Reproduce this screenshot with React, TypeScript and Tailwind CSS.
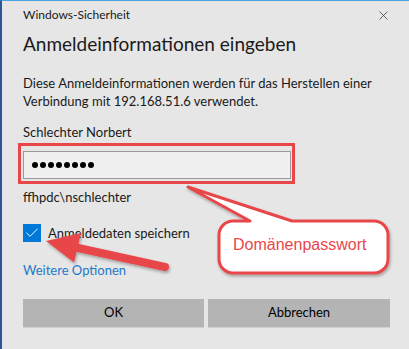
import { Check, X } from "lucide-react"

const font = { fontFamily: 'Lato, "Noto Sans", sans-serif' }

function Overlay() {
    return (
        <svg
            className="absolute left-0 top-0 pointer-events-none"
            width={409}
            height={349}
            viewBox="0 0 409 349"
        >
            <defs>
                <filter id="shadow" x="-20%" y="-20%" width="140%" height="160%">
                    <feDropShadow dx="1" dy="2" stdDeviation="1.5" floodColor="#000" floodOpacity="0.3" />
                </filter>
            </defs>
            {/* callout bubble */}
            <path
                d="M186 186 L290 220 H372 A14 14 0 0 1 386 234 V258 A14 14 0 0 1 372 272 H231 A14 14 0 0 1 217 258 V234 A14 14 0 0 1 231 220 H248 Z"
                fill="#fff"
                stroke="#e8474a"
                strokeWidth={3}
                strokeLinejoin="round"
                filter="url(#shadow)"
            />
            {/* arrow to the checkbox */}
            <g filter="url(#shadow)">
                <line x1={163} y1={266} x2={74} y2={246.5} stroke="#e8474a" strokeWidth={8} strokeLinecap="round" />
                <polygon points="44,240 79,232 72,261.5" fill="#e8474a" />
            </g>
        </svg>
    )
}

export default function App() {
    return (
        <div
            className="relative w-[409px] h-[349px] overflow-hidden bg-[#e6e6e6] border-l-2 border-l-[#2b5797] border-t border-t-[#4aa3df] text-[#1a1a1a]"
            style={font}
        >
            <div className="pl-[21px] pr-[19px]">
                <div className="flex items-center justify-between pt-[6px] h-[22px]">
                    <span className="text-[12px] leading-4">Windows-Sicherheit</span>
                    <X className="w-[15px] h-[15px] text-[#333] mr-[-1px]" strokeWidth={1.2} />
                </div>
                <h1 className="mt-[7px] text-[19px] leading-7 font-normal">Anmeldeinformationen eingeben</h1>
                <p className="mt-[16px] text-[13px] leading-[18px]">
                    Diese Anmeldeinformationen werden für das Herstellen einer
                    <br />
                    Verbindung mit 192.168.51.6 verwendet.
                </p>
                <div className="mt-[13px] text-[13px] leading-[18px]">Schlechter Norbert</div>
                <div className="mt-[10px] w-[268px] h-[28px] bg-[#f0f0f0] border border-[#9a9a9a] flex items-center pl-[8px] gap-[2px]">
                    {Array.from({ length: 8 }).map((_, i) => (
                        <span key={i} className="w-[6px] h-[6px] rounded-full bg-black" />
                    ))}
                </div>
                <div className="mt-[9px] text-[13px] leading-[18px]">ffhpdc\nschlechter</div>
                <div className="mt-[17px] h-[20px] flex items-center gap-[7px]">
                    <span className="w-[18px] h-[18px] bg-[#0078d7] flex items-center justify-center">
                        <Check className="w-[16px] h-[16px] text-white" strokeWidth={1.4} />
                    </span>
                    <span className="text-[13px] leading-[18px]">Anmeldedaten speichern</span>
                </div>
                <div className="mt-[18px] text-[13px] leading-[18px] text-[#1f78c8]">Weitere Optionen</div>
                <div className="mt-[20px] flex gap-[4px]">
                    <button className="w-[181px] h-[29px] bg-[#b4b4b4] text-[13px] text-black border-b border-b-[#d0d0d0]">OK</button>
                    <button className="w-[182px] h-[29px] bg-[#b4b4b4] text-[13px] text-black border-b border-b-[#d0d0d0]">Abbrechen</button>
                </div>
            </div>

            {/* annotation: red frame around the password field */}
            <div className="absolute left-[16px] top-[142px] w-[277px] h-[41px] border-[3px] border-[#e8474a] pointer-events-none" />
            <Overlay />
            <span
                className="absolute left-[231px] top-[234px] text-[16px] leading-5 text-[#e8474a]"
                style={{ fontFamily: '"Liberation Sans", Arial, sans-serif' }}
            >
                Domänenpasswort
            </span>
        </div>
    )
}
